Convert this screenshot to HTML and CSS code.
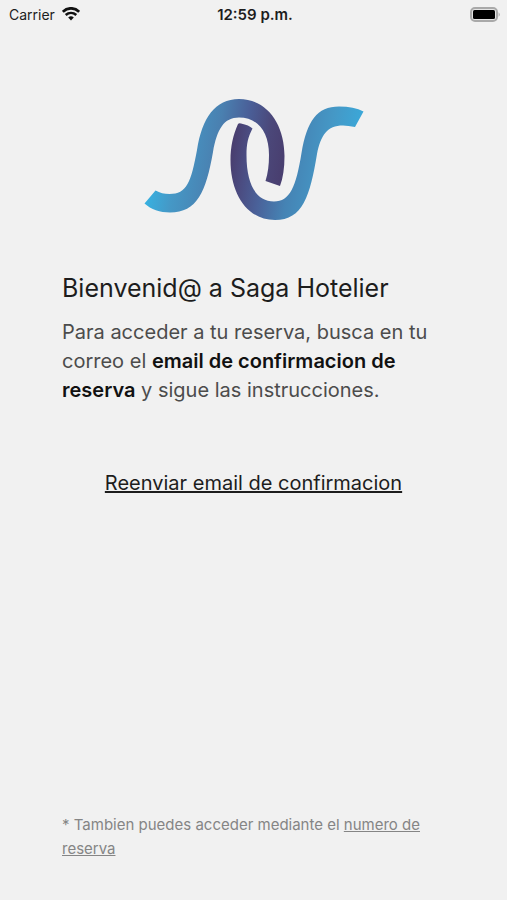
FILE: index.html
```html
<!DOCTYPE html>
<html lang="es">
<head>
<meta charset="utf-8">
<meta name="viewport" content="width=device-width, initial-scale=1">
<title>Saga Hotelier</title>
<link rel="stylesheet" href="styles.css">
</head>
<body>
<header class="status">
  <div class="carrier">
    <span>Carrier</span>
    <svg width="18" height="14" viewBox="0 0 18 14" fill="none" stroke="#111" aria-hidden="true">
      <path d="M.8 4.800C5.500.2 12.500.2 17.200 4.800" stroke-width="2.800"/>
      <path d="M3.700 8C6.800 5.200 11.200 5.200 14.300 8" stroke-width="2.500"/>
      <path d="M6.200 10.500Q9 8.100 11.800 10.500L9 13.500Z" fill="#111" stroke="none"/>
    </svg>
  </div>
  <div class="clock">12:59 p.m.</div>
  <svg class="battery" width="31" height="15" viewBox="0 0 31 15" aria-hidden="true">
    <rect x="1" y="1" width="26" height="13" rx="4" fill="#e4e4e4" stroke="#a9a9a9" stroke-width="2"/>
    <rect x="3" y="3" width="22" height="9" rx="1.500" fill="#000"/>
    <path d="M28.600 5.200Q31 7.500 28.600 9.800Z" fill="#a9a9a9"/>
  </svg>
</header>
<main class="content">
  <svg class="logo" width="220" height="124" viewBox="144 98 220 124" role="img" aria-label="Saga Hotelier">
    <defs>
      <linearGradient id="left" gradientUnits="userSpaceOnUse" x1="146" y1="168" x2="278" y2="188">
        <stop offset="0" stop-color="#35b5e5"/>
        <stop offset=".22" stop-color="#4598c6"/>
        <stop offset=".5" stop-color="#4a80b0"/>
        <stop offset=".7" stop-color="#4a5f98"/>
        <stop offset=".88" stop-color="#4b4779"/>
        <stop offset="1" stop-color="#493f70"/>
      </linearGradient>
      <linearGradient id="right" gradientUnits="userSpaceOnUse" x1="236" y1="130" x2="360" y2="150">
        <stop offset="0" stop-color="#493f70"/>
        <stop offset=".1" stop-color="#4b4b80"/>
        <stop offset=".26" stop-color="#4a6199"/>
        <stop offset=".48" stop-color="#4583b4"/>
        <stop offset=".75" stop-color="#4598c6"/>
        <stop offset="1" stop-color="#3aa9da"/>
      </linearGradient>
    </defs>
    <path fill="url(#left)" d="M144.500 203.500L155.500 190.500C160 193 164 194 169.500 194C187 194 191 182 197 150C202 118 215 99 239 99C267 99 284.500 124 284.500 156C284.500 168 283 178 280 186L265.500 181C268 173 269 165 269 155C269 132 258 117.500 239 117.500C224 117.500 217 129 213 152C206 192 197 212.500 170 212.500C160 212.500 151 209.500 144.500 203.500Z"/>
    <path fill="url(#right)" d="M238 124Q239 123 241 123.500Q249 125 252.500 128.500C248 137 246.500 144 246.500 155C246.500 184 256 201.500 274 201.500C290 201.500 296 187 301.500 153C307 121 317 106.500 339 106.500Q354 106.500 363.500 111.500L355 127Q348 125.500 343 125.500C327 125.500 321 135 317 154C310 196 303 220 275 220C247 220 230.500 194 230.500 160C230.500 147 233 135 238 124Z"/>
  </svg>
  <h1>Bienvenid@ a Saga Hotelier</h1>
  <p class="intro">Para acceder a tu reserva, busca en tu correo el <strong>email de confirmacion de reserva</strong> y sigue las instrucciones.</p>
  <a class="resend" href="#reenviar">Reenviar email de confirmacion</a>
  <p class="note">* Tambien puedes acceder mediante el <a href="#reserva">numero de reserva</a></p>
</main>
</body>
</html>
```
FILE: styles.css
```css
* {
  box-sizing: border-box;
}

body {
  margin: 0;
  min-height: 100vh;
  display: flex;
  flex-direction: column;
  background: #f1f1f1;
  color: #1d1d1d;
  font-family: Inter, "Liberation Sans", sans-serif;
}

.status {
  display: grid;
  grid-template-columns: 1fr auto 1fr;
  align-items: center;
  height: 28px;
  padding: 0 6px 0 9px;
  font-size: 14px;
}

.carrier {
  display: flex;
  align-items: center;
  gap: 7px;
}

.clock {
  font-size: 15px;
  font-weight: 600;
}

.battery {
  justify-self: end;
}

.content {
  flex: 1;
  display: flex;
  flex-direction: column;
  padding: 70px 62px 39px;
}

.logo {
  align-self: center;
}

h1 {
  margin: 48px 0 0;
  font-size: 25px;
  line-height: 36px;
  font-weight: 400;
}

.intro {
  margin: 12px 0 0;
  font-size: 20px;
  line-height: 29px;
  color: #4c4c4c;
}

.intro strong {
  font-weight: 600;
  color: #111;
}

.resend {
  align-self: center;
  margin-top: 64px;
  font-size: 20px;
  line-height: 28px;
  color: #1d1d1d;
}

.note {
  margin: auto 0 0;
  font-size: 15px;
  line-height: 24px;
  color: #858585;
}

.note a {
  color: inherit;
}
```
